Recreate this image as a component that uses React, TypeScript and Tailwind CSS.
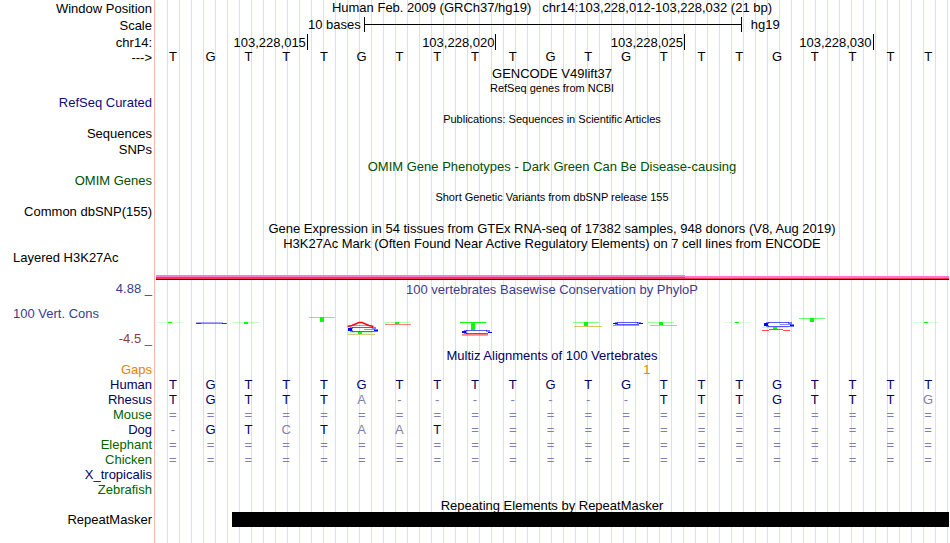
import React from "react";
import clsx from "clsx";

interface RowProps {
  label?: React.ReactNode;
  labelClass?: string;
  trackClass?: string;
  height: string;
  children?: React.ReactNode;
}

const GRID =
  "bg-[repeating-linear-gradient(to_right,transparent_0_11px,#dcdcff_11px_12px)] bg-no-repeat bg-position-[1px_0]";

// one line of the browser: label on the left, track on the right
const Row: React.FC<RowProps> = ({
  label,
  labelClass = "text-right",
  trackClass,
  height,
  children,
}) => (
  <div className={clsx("flex", height)}>
    <div className={clsx("w-[154px] shrink-0 pr-[2px]", labelClass)}>
      {label}
    </div>
    <div
      className={clsx("flex-1 min-w-0 border-l border-[#ffb4b4]", GRID, trackClass)}
    >
      {children}
    </div>
  </div>
);

// upper case = same base, lower case = differs from human
const Bases: React.FC<{ seq: string }> = ({ seq }) => (
  <div className="-ml-px pr-[2px] grid grid-cols-[repeat(21,minmax(0,1fr))] text-center">
    {seq.split("").map((base, i) => (
      <span key={i} className={/[A-Z]/.test(base) ? "" : "text-[#8080b0]"}>
        {base.toUpperCase()}
      </span>
    ))}
  </div>
);

const HUMAN = "TGTTTGTTTTGTGTTTGTTTT";
const ALL_GAP = "=".repeat(21);

const species = [
  { name: "Human", seq: HUMAN, color: "text-[#000064]" },
  { name: "Rhesus", seq: "TGTTTa-------TTTGTTTg", color: "text-[#000064]" },
  { name: "Mouse", seq: ALL_GAP, color: "text-[#006400]" },
  { name: "Dog", seq: "-GTcTaaT=============", color: "text-[#000064]" },
  { name: "Elephant", seq: ALL_GAP, color: "text-[#006400]" },
  { name: "Chicken", seq: ALL_GAP, color: "text-[#006400]" },
  { name: "X_tropicalis", seq: "", color: "text-[#000064]" },
  { name: "Zebrafish", seq: "", color: "text-[#006400]" },
];

// thymine bars: x, y, stem height, opacity of the top line
const tBars = [
  [157, 322, 1, 0.15],
  [233, 322, 2, 0.25],
  [309, 317, 5, 0.6],
  [347, 332, 2, 0.25],
  [384, 322, 2, 0.3],
  [460, 322, 8, 1],
  [573, 322, 4, 0.5],
  [648, 322, 3, 0.4],
  [724, 322, 1, 0.15],
  [762, 327, 2, 0.25],
  [799, 318, 4, 0.6],
  [913, 322, 1, 0.15],
];

// thin lines left by very low letters
const slivers = [
  [348, 334, 27, "#c8b450", 0.7],
  [385, 324, 26, "#ff0000", 0.5],
  [462, 334, 26, "#ff0000", 0.5],
  [462, 335, 26, "#b4a000", 0.6],
  [574, 326, 28, "#b4a000", 0.6],
  [613, 325, 26, "#ff0000", 0.5],
  [650, 325, 27, "#b4a000", 0.6],
] as const;

// guanine loops: x, y, height
const gLoops = [
  [347, 327, 5],
  [461, 330, 4],
  [612, 322, 3],
  [763, 322, 5],
];

const ConservationLogo = () => (
  <svg
    className="block w-full h-[51px]"
    viewBox="155 297 794 51"
    preserveAspectRatio="none"
    aria-hidden="true"
  >
    {gLoops.map(([x, y, h]) => (
      <g key={x} stroke="#0000ff">
        <path
          d={`M${x + 5} ${y + 0.5} H${x + 26} M${x + 5} ${y + h - 0.5} H${x + 27}`}
          strokeOpacity="0.65"
        />
        {h > 4 && (
          <path d={`M${x + 17} ${y + 2.5} H${x + 28}`} strokeOpacity="0.45" />
        )}
        <path
          d={`M${x + 1} ${y + h / 2} h4`}
          strokeWidth={h > 3 ? h - 2 : 1}
        />
        <path d={`M${x + 3} ${y + 1} h3 M${x + 3} ${y + h - 1} h3`} />
        <path d={`M${x + 25} ${y + 1} h4`} />
        <path
          d={`M${x + 27} ${y + h - 1.5} h4`}
          strokeWidth={h > 4 ? 2 : 1}
        />
      </g>
    ))}
    <path d="M196 322.5 H223" stroke="#0000ff" strokeOpacity="0.35" />
    <path d="M197 323.5 H226" stroke="#0000ff" strokeOpacity="0.5" />
    <path
      d="M196 323.5 H201 M222 323.5 H227"
      stroke="#0000ff"
      strokeOpacity="0.7"
    />
    <path
      d="M347.5 326.5 L352 325.5 L359 322.5 H362 L369 325.5 L373.5 326.5"
      fill="none"
      stroke="#ff0000"
      strokeWidth="1.4"
    />
    <path d="M352 325.5 H369" stroke="#ff0000" strokeOpacity="0.5" />
    <path
      d="M762 330.5 H769 M783 330.5 H790 M769 329.5 H783"
      stroke="#ff0000"
      strokeOpacity="0.7"
    />
    {tBars.map(([x, y, h, o]) => (
      <g key={x} fill="#00ff00">
        <rect x={x} y={y} width="26" height="1" fillOpacity={o} />
        <rect x={x + 11} y={y} width="4" height={h} />
      </g>
    ))}
    {slivers.map(([x, y, w, fill, o]) => (
      <rect key={`${x}-${y}`} x={x} y={y} width={w} height="1" fill={fill} fillOpacity={o} />
    ))}
  </svg>
);

const App = () => {
  return (
    <main className="bg-white text-black text-[13px] leading-[15px] font-['Liberation_Sans',Arial,sans-serif] whitespace-nowrap overflow-hidden pr-px">
      {/* position and ruler */}
      <Row
        height="h-[17px]"
        label="Window Position"
        labelClass="text-right pt-px"
        trackClass="text-center whitespace-pre"
      >
        {"Human Feb. 2009 (GRCh37/hg19)   chr14:103,228,012-103,228,032 (21 bp)"}
      </Row>
      <Row
        height="h-[17px]"
        label="Scale"
        labelClass="text-right pt-px"
        trackClass="flex"
      >
        <span className="w-[26.3%] text-right pr-[3px]">10 bases</span>
        <span className="w-[47.6%] h-[15px] border-x border-black flex items-center">
          <span className="w-full h-px bg-black" />
        </span>
        <span className="pl-[9px]">hg19</span>
      </Row>
      <Row
        height="h-[15px]"
        label="chr14:"
        labelClass="text-right pt-px"
        trackClass="pl-[2px]"
      >
        <div className="grid grid-cols-[repeat(21,minmax(0,1fr))] h-[14px] text-right">
          <span className="col-span-4 border-r border-black pr-px pt-px">
            103,228,015
          </span>
          <span className="col-span-5 border-r border-black pr-px pt-px">
            103,228,020
          </span>
          <span className="col-span-5 border-r border-black pr-px pt-px">
            103,228,025
          </span>
          <span className="col-span-5 border-r border-black pr-px pt-px">
            103,228,030
          </span>
        </div>
      </Row>
      <Row height="h-[17px]" label="--->" labelClass="text-right pt-px">
        <Bases seq={HUMAN} />
      </Row>

      {/* gene and variant tracks */}
      <Row height="h-[15px]" trackClass="text-center">
        GENCODE V49lift37
      </Row>
      <Row height="h-[14px]" trackClass="text-center text-[11px]">
        RefSeq genes from NCBI
      </Row>
      <Row
        height="h-[17px]"
        label="RefSeq Curated"
        labelClass="text-right text-[#0c0c78]"
      />
      <Row height="h-[14px]" trackClass="text-center text-[11px]">
        Publications: Sequences in Scientific Articles
      </Row>
      <Row height="h-[16px]" label="Sequences" />
      <Row height="h-[17px]" label="SNPs" />
      <Row height="h-[14px]" trackClass="text-center text-[#005000]">
        OMIM Gene Phenotypes - Dark Green Can Be Disease-causing
      </Row>
      <Row
        height="h-[17px]"
        label="OMIM Genes"
        labelClass="text-right text-[#005000]"
      />
      <Row height="h-[14px]" trackClass="text-center text-[11px]">
        Short Genetic Variants from dbSNP release 155
      </Row>
      <Row height="h-[17px]" label="Common dbSNP(155)" />
      <Row height="h-[15px]" trackClass="text-center">
        Gene Expression in 54 tissues from GTEx RNA-seq of 17382 samples, 948
        donors (V8, Aug 2019)
      </Row>
      <Row height="h-[14px]" trackClass="text-center">
        H3K27Ac Mark (Often Found Near Active Regulatory Elements) on 7 cell
        lines from ENCODE
      </Row>
      <Row height="h-[25px]" label="Layered H3K27Ac" labelClass="pl-[13px]" />
      <Row height="h-[6px]" trackClass="pl-px">
        <div className="flex items-end h-[5px]">
          <div className="w-2/3 h-[5px] border-b border-[#32002d] bg-[#ff3250] border-t-2 border-t-[#ff78d2]" />
          <div className="w-1/3 h-[4px] border-b border-[#32002d] bg-[#ff3250] border-t-2 border-t-[#ff78d2]" />
        </div>
      </Row>

      {/* conservation */}
      <Row
        height="h-[16px]"
        label="4.88 _"
        labelClass="text-right text-[#3c3c8c]"
        trackClass="pt-px text-center text-[#3c3c8c]"
      >
        100 vertebrates Basewise Conservation by PhyloP
      </Row>
      <Row
        height="h-[51px]"
        labelClass="flex flex-col gap-[10px] pt-[9px] pl-[13px]"
        label={
          <>
            <span className="text-[#3c3c8c]">100 Vert. Cons</span>
            <span className="text-right text-[#8c3c3c]">-4.5 _</span>
          </>
        }
      >
        <ConservationLogo />
      </Row>

      {/* multiz alignment */}
      <Row height="h-[14px]" trackClass="text-center text-[#000064]">
        Multiz Alignments of 100 Vertebrates
      </Row>
      <Row
        height="h-[15px]"
        label="Gaps"
        labelClass="text-right text-[#e68200]"
        trackClass="text-[#e68200]"
      >
        <div className="w-[62.4%] text-right">1</div>
      </Row>
      {species.map((s) => (
        <Row
          key={s.name}
          height="h-[15px]"
          label={s.name}
          labelClass={clsx("text-right", s.color)}
          trackClass="text-[#000064]"
        >
          <Bases seq={s.seq} />
        </Row>
      ))}

      <Row height="h-[15px]" trackClass="pt-px text-center">
        Repeating Elements by RepeatMasker
      </Row>
      <Row height="h-[31px]" label="RepeatMasker">
        <div className="ml-[9.7%] h-[15px] bg-black" />
      </Row>
    </main>
  );
};

export default App;
